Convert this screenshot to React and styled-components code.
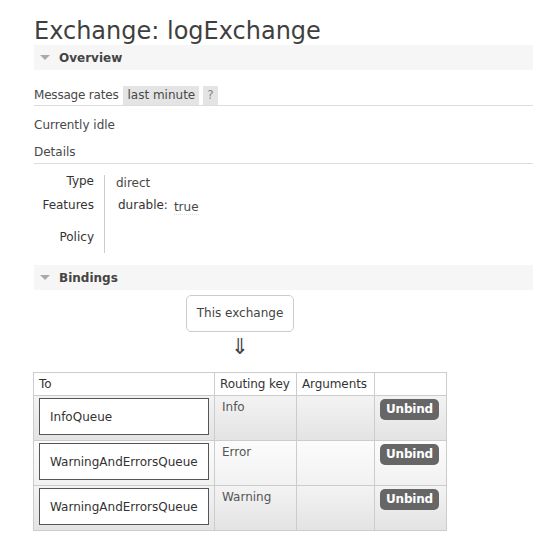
import React from "react";
import styled, { createGlobalStyle } from "styled-components";

const Global = createGlobalStyle`
  html, body { margin: 0; padding: 0; background: #fff; }
  body {
    font-family: "DejaVu Sans", Verdana, sans-serif;
    font-size: 12px;
    color: #484848;
  }
`;

const Page = styled.div`
  margin-left: 34px;
  padding-top: 17px;
`;

const Title = styled.h1`
  margin: 0;
  font-size: 24px;
  font-weight: normal;
  line-height: 28px;
  color: #3f3f3f;
`;

const SectionBar = styled.div`
  display: flex;
  align-items: center;
  height: 25px;
  background: #f6f6f6;
  padding-left: 6px;
  margin-top: ${(p) => p.$mt || 0}px;
  font-weight: bold;
  color: #444;
  gap: 9px;
`;

const Tri = styled.span`
  width: 0;
  height: 0;
  border-left: 5px solid transparent;
  border-right: 5px solid transparent;
  border-top: 5px solid #aaa;
`;

const RatesRow = styled.div`
  display: flex;
  align-items: stretch;
  height: 19px;
  margin-top: 16px;
  border-bottom: 1px solid #ddd;
  gap: 4px;
  line-height: 19px;
`;

const RatesLabel = styled.span`
  margin-right: 1px;
  letter-spacing: -0.2px;
`;

const Pill = styled.span`
  background: #e4e4e4;
  padding: 0 4px;
  color: ${(p) => (p.$muted ? "#888" : "#484848")};
`;

const Para = styled.div`
  margin-top: ${(p) => p.$mt}px;
  line-height: 15px;
  ${(p) => (p.$rule ? "border-bottom: 1px solid #ddd; padding-bottom: 3px;" : "")}
`;

const Details = styled.div`
  display: grid;
  grid-template-columns: 71px auto;
  margin-top: 11px;
`;

const DLabel = styled.div`
  text-align: right;
  padding-right: 10px;
  border-right: 1px solid #ccc;
  height: ${(p) => p.$h}px;
  padding-top: ${(p) => p.$pt}px;
  box-sizing: border-box;
  line-height: 12px;
  color: #333;
`;

const DValue = styled.div`
  padding-left: ${(p) => p.$pl || 11}px;
  padding-top: ${(p) => p.$pt}px;
  line-height: 12px;
  display: flex;
  align-items: flex-start;
  gap: 6px;
`;

const Key = styled.span`
  color: #333;
`;

const Val = styled.span`
  padding-top: 2px;
  border-bottom: 1px dotted #ddd;
  padding-bottom: 1px;
`;

const Bindings = styled.div`
  width: 412px;
  display: flex;
  flex-direction: column;
  align-items: center;
`;

const ExchangeBox = styled.div`
  margin-top: 5px;
  border: 1px solid #ccc;
  border-radius: 5px;
  height: 35px;
  line-height: 35px;
  padding: 0 10px;
  color: #444;
`;

const Arrow = styled.div`
  margin-top: 3px;
  font-size: 22px;
  line-height: 24px;
  color: #444;
  font-family: "DejaVu Sans", sans-serif;
`;

const Table = styled.table`
  margin-top: 13px;
  border-collapse: collapse;
  table-layout: fixed;
  width: 413px;
  border: 1px solid #ccc;
`;

const Th = styled.th`
  text-align: left;
  font-weight: normal;
  height: 23px;
  padding: 0 5px;
  border: 1px solid #ccc;
  color: #333;
  width: ${(p) => p.$w}px;
  box-sizing: border-box;
  letter-spacing: -0.1px;
  white-space: nowrap;
  overflow: hidden;
`;

const Tr = styled.tr`
  background: ${(p) =>
    p.$odd
      ? "linear-gradient(#f3f3f3, #e3e3e3)"
      : "linear-gradient(#fcfcfc, #f1f1f1)"};
`;

const Td = styled.td`
  vertical-align: top;
  height: 45px;
  padding: 2px 5px 0;
  border: 1px solid #ccc;
  box-sizing: border-box;
  line-height: 15px;
`;

const QueueBox = styled.div`
  display: block;
  background: #fff;
  border: 1px solid #555;
  height: 35px;
  line-height: 36px;
  padding: 0 10px;
  color: #333;
  white-space: nowrap;
`;

const RKey = styled.div`
  padding: 2px 2px 0;
  color: #555;
`;

const UnbindBtn = styled.button`
  display: block;
  border: 0;
  background: #666;
  color: #fff;
  font-family: inherit;
  font-size: 12px;
  font-weight: bold;
  border-radius: 5px;
  height: 21px;
  padding: 0 6px;
  line-height: 21px;
  letter-spacing: -0.2px;
  margin-top: 1px;
`;

const bindings = [
  { to: "InfoQueue", key: "Info" },
  { to: "WarningAndErrorsQueue", key: "Error" },
  { to: "WarningAndErrorsQueue", key: "Warning" },
];

export default function App() {
  return (
    <>
      <Global />
      <Page>
        <Title>Exchange: logExchange</Title>
        <SectionBar>
          <Tri />
          Overview
        </SectionBar>
        <RatesRow>
          <RatesLabel>Message rates</RatesLabel>
          <Pill>last minute</Pill>
          <Pill $muted>?</Pill>
        </RatesRow>
        <Para $mt={12}>Currently idle</Para>
        <Para $mt={12} $rule>Details</Para>
        <Details>
          <DLabel $h={24} $pt={0}>Type</DLabel>
          <DValue $pt={2}>direct</DValue>
          <DLabel $h={32} $pt={0}>Features</DLabel>
          <DValue $pt={0} $pl={13}>
            <Key>durable:</Key>
            <Val>true</Val>
          </DValue>
          <DLabel $h={22} $pt={0}>Policy</DLabel>
          <DValue $pt={0} />
        </Details>
        <SectionBar $mt={12}>
          <Tri />
          Bindings
        </SectionBar>
        <Bindings>
          <ExchangeBox>This exchange</ExchangeBox>
          <Arrow>⇓</Arrow>
          <Table>
            <thead>
              <tr>
                <Th $w={181}>To</Th>
                <Th $w={82}>Routing key</Th>
                <Th $w={78}>Arguments</Th>
                <Th $w={72}></Th>
              </tr>
            </thead>
            <tbody>
              {bindings.map((b, i) => (
                <Tr key={i} $odd={i % 2 === 0}>
                  <Td>
                    <QueueBox>{b.to}</QueueBox>
                  </Td>
                  <Td>
                    <RKey>{b.key}</RKey>
                  </Td>
                  <Td></Td>
                  <Td>
                    <UnbindBtn>Unbind</UnbindBtn>
                  </Td>
                </Tr>
              ))}
            </tbody>
          </Table>
        </Bindings>
      </Page>
    </>
  );
}
